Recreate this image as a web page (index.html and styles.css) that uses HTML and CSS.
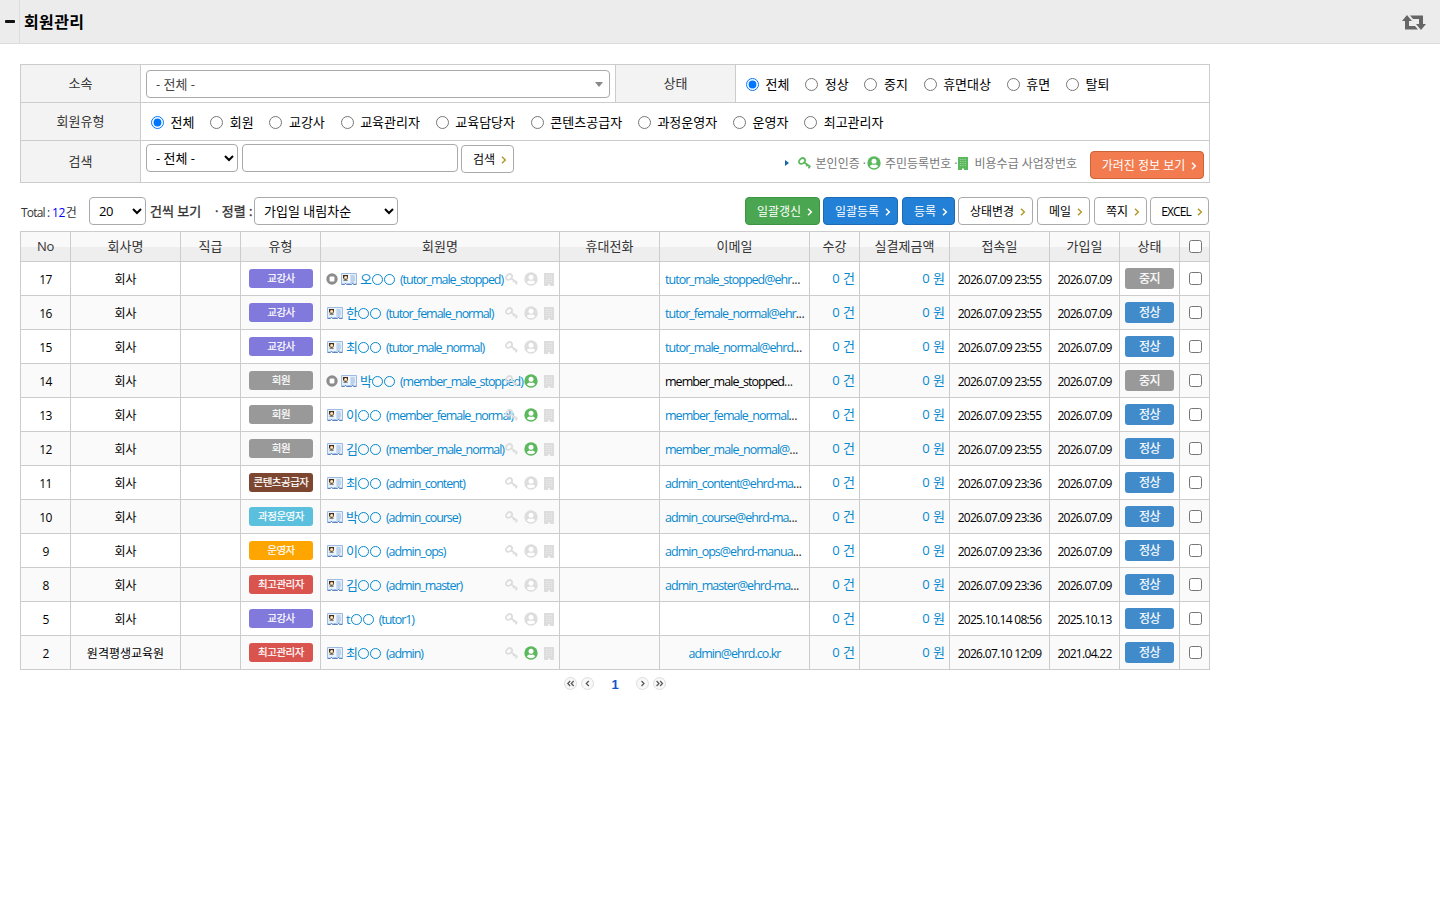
FILE: index.html
```html
<!DOCTYPE html>
<html lang="ko">
<head>
<meta charset="utf-8">
<title>회원관리</title>
<link rel="stylesheet" href="styles.css">
</head>
<body>
<svg width="0" height="0" class="defs">
  <symbol id="chev" viewBox="0 0 6 8"><path d="M1 .8 4.3 4 1 7.2" fill="none" stroke="currentColor" stroke-width="1.5"/></symbol>
  <symbol id="key" viewBox="0 0 13 12"><ellipse cx="4" cy="4" rx="3.300" ry="2.500" transform="rotate(-40 4 4)" fill="none" stroke="currentColor" stroke-width="1.800"/><path d="M6 5.200 12.300 9.700M8.300 9.200 9.800 7.200M10.600 11.400 12.200 8.800" fill="none" stroke="currentColor" stroke-width="1.800"/></symbol>
  <symbol id="user" viewBox="0 0 14 14"><circle cx="7" cy="7" r="6.700" fill="currentColor"/><circle cx="7" cy="5.200" r="2.500" fill="#fff"/><path d="M2.800 10.200Q4 8.600 5.400 8.600Q7 9.500 8.600 8.600Q10 8.600 11.200 10.200Q9.800 12.200 7 12.200T2.800 10.200z" fill="#fff"/></symbol>
  <symbol id="bldg" viewBox="0 0 10 13"><path d="M0 0h10v13H6v-1.500H4V13H0z" fill="currentColor"/><path d="M2 2.500h6M2 4.500h6M2 6.500h6M2 8.500h6" stroke="#fff" stroke-opacity=".35" stroke-width="1" stroke-dasharray="1 .67"/></symbol>
  <symbol id="stop" viewBox="0 0 12 12"><circle cx="6" cy="6" r="5.700" fill="#8d8d8d"/><rect x="3.600" y="3.600" width="4.800" height="4.800" rx="1" fill="#fff"/></symbol>
  <symbol id="card" viewBox="0 0 16 12"><path d="M.5.5h15v10.500h-3l-.7-1-1 1H9l-1-1-1 1H5.500l-1-1-1 1h-3z" fill="#e2effd" stroke="#9dbbe2"/><path d="M.5 11.500h3l1-1 1 1h5l1-1 1 1h3" fill="none" stroke="#4f76b5" stroke-width=".9"/><path d="M8 1v9" stroke="#fff"/><rect x="2" y="2" width="5" height="5.500" fill="#e8dcc0"/><path d="M2 2h5v3.500H2z" fill="#4a2c12"/><circle cx="4.700" cy="4.300" r="1.400" fill="#ffe6c2"/><path d="M2.300 7.500q2.300-2.400 4.500 0z" fill="#222"/><path d="M9.500 3h4M9.500 5h4.500M9.500 7h4.500M9.500 9h3.500" stroke="#9bb5da"/></symbol>
</svg>

<header class="topbar">
  <div class="fold"><i></i></div>
  <h1>회원관리</h1>
  <svg class="retweet" viewBox="0 0 24 15"><path d="M5 0 10 6H7v5h6l3 3.500H3V6H0zM19 15 14 9h3V4h-6L8 .5h13V9h3z" fill="#666"/></svg>
</header>

<main>
  <section class="filter">
    <div class="frow r1">
      <div class="lab">소속</div>
      <div class="cell"><div class="combo"><span>- 전체 -</span><i></i></div></div>
      <div class="lab mid">상태</div>
      <div class="cell radios">
        <label><input type="radio" name="st" checked>전체</label><label><input type="radio" name="st">정상</label><label><input type="radio" name="st">중지</label><label><input type="radio" name="st">휴면대상</label><label><input type="radio" name="st">휴면</label><label><input type="radio" name="st">탈퇴</label>
      </div>
    </div>
    <div class="frow r2">
      <div class="lab">회원유형</div>
      <div class="cell radios">
        <label><input type="radio" name="ty" checked>전체</label><label><input type="radio" name="ty">회원</label><label><input type="radio" name="ty">교강사</label><label><input type="radio" name="ty">교육관리자</label><label><input type="radio" name="ty">교육담당자</label><label><input type="radio" name="ty">콘텐츠공급자</label><label><input type="radio" name="ty">과정운영자</label><label><input type="radio" name="ty">운영자</label><label><input type="radio" name="ty">최고관리자</label>
      </div>
    </div>
    <div class="frow r3">
      <div class="lab">검색</div>
      <div class="cell search">
        <select class="s1"><option>- 전체 -</option></select>
        <input type="text" class="q">
        <button class="btn find">검색<svg><use href="#chev"/></svg></button>
        <div class="legend">
          <i class="tri"></i>
          <svg class="k"><use href="#key"/></svg><span class="l1">본인인증 ·</span>
          <svg class="u"><use href="#user"/></svg><span class="l2">주민등록번호 ·</span>
          <svg class="b"><use href="#bldg"/></svg><span class="l3">비용수급 사업장번호</span>
        </div>
        <button class="btn orange">가려진 정보 보기<svg><use href="#chev"/></svg></button>
      </div>
    </div>
  </section>

  <section class="tools">
    <span class="total"><span class="tt">Total :</span> <b>12</b>건</span>
    <select class="s2"><option>20</option></select>
    <span class="strong per">건씩 보기</span>
    <span class="strong sort">· 정렬 :</span>
    <select class="s3"><option>가입일 내림차순</option></select>
    <div class="buttons">
      <button class="btn green w75">일괄갱신<svg><use href="#chev"/></svg></button>
      <button class="btn blue w75 g4">일괄등록<svg><use href="#chev"/></svg></button>
      <button class="btn blue w53">등록<svg><use href="#chev"/></svg></button>
      <button class="btn w75 g4">상태변경<svg><use href="#chev"/></svg></button>
      <button class="btn w53 g4">메일<svg><use href="#chev"/></svg></button>
      <button class="btn w53">쪽지<svg><use href="#chev"/></svg></button>
      <button class="btn w59"><span class="xl">EXCEL</span><svg><use href="#chev"/></svg></button>
    </div>
  </section>

  <table class="list">
    <colgroup><col class="c50"><col class="c110"><col class="c60"><col class="c80"><col class="c239"><col class="c100"><col class="c150"><col class="c50"><col class="c90"><col class="c100"><col class="c70"><col class="c60"><col class="c30"></colgroup>
    <thead><tr><th><span class="no">No</span></th><th>회사명</th><th>직급</th><th>유형</th><th>회원명</th><th>휴대전화</th><th>이메일</th><th>수강</th><th>실결제금액</th><th>접속일</th><th>가입일</th><th>상태</th><th><input type="checkbox"></th></tr></thead>
    <tbody id="rows"></tbody>
  </table>

  <nav class="pager">
    <a><svg viewBox="0 0 13 13"><path d="M6.200 4 3.800 6.500l2.400 2.500M9.700 4 7.300 6.500l2.400 2.500"/></svg></a>
    <a><svg viewBox="0 0 13 13"><path d="M7.800 4 5.300 6.500l2.500 2.500"/></svg></a>
    <strong>1</strong>
    <a><svg viewBox="0 0 13 13"><path d="M5.500 4 8 6.500 5.500 9"/></svg></a>
    <a><svg viewBox="0 0 13 13"><path d="M3.600 4 6 6.500 3.600 9M7.100 4l2.400 2.500L7.100 9"/></svg></a>
  </nav>
</main>
<script src="rows.js"></script>
</body>
</html>
```
FILE: styles.css
```css
* { box-sizing: border-box; }
body { margin: 0; background: #fff; color: #000; font: 13px/18px "Open Sans", "Noto Sans CJK KR", sans-serif; }
.defs { position: absolute; }
svg { display: block; flex: none; }
.topbar { display: flex; height: 44px; background: #ececec; border-bottom: 1px solid #dcdcdc; }
.fold { width: 20px; border-right: 1px solid #dcdcdc; padding: 20px 0 0 5px; }
.fold i { display: block; width: 10px; height: 3px; background: #111; border-radius: 1px; }
h1 { margin: 11px 0 0 4px; font-size: 16px; line-height: 22px; font-weight: 700; letter-spacing: .4px; }
.retweet { width: 24px; height: 15px; margin: 15px 14px 0 auto; }
main { width: 1190px; margin: 20px 0 0 20px; }

.filter { border: 1px solid #ccc; border-bottom: 0; }
.frow { display: grid; grid-template-columns: 120px 1fr; border-bottom: 1px solid #ccc; height: 38px; }
.r1 { grid-template-columns: 120px 474px 121px 1fr; }
.r3 { height: 42px; }
.lab { background: #f3f3f3; border-right: 1px solid #ccc; color: #333; text-align: center; line-height: 36px; }
.r3 .lab { line-height: 40px; }
.mid { border-left: 1px solid #ccc; }
.cell { padding-left: 5px; min-width: 0; }
.combo { display: flex; align-items: center; justify-content: space-between; width: 464px; height: 28px; margin-top: 5px; border: 1px solid #aaa; border-radius: 4px; padding: 0 6px 0 9px; color: #444; }
.combo i { border: 4px solid transparent; border-top: 5px solid #888; border-bottom: 0; }
.radios { display: flex; padding: 1px 0 0 10px; gap: 15.800px; align-items: center; white-space: nowrap; }
.radios label { display: flex; align-items: center; }
.radios input { margin: 0 6.500px 0 0; width: 13px; height: 13px; }
.search { display: flex; align-items: flex-start; padding-top: 3px; padding-right: 5px; }
select, .q { height: 28px; border: 1px solid #aaa; border-radius: 4px; background: #fff; color: #000; font: inherit; }
select { padding: 0 0 0 5px; }
.s1 { width: 92px; margin-right: 4px; }
.s2 { letter-spacing: -.5px; }
.q { width: 216px; margin-right: 3px; }
.btn { display: flex; align-items: center; justify-content: center; gap: 6px; height: 28px; padding: 1px 0 0 5px; border: 1px solid #aaa; border-radius: 4px; background: #fff; color: #000; font: 12px/18px "Open Sans", "Noto Sans CJK KR", sans-serif; white-space: nowrap; flex: none; }
.btn svg { width: 6px; height: 8px; color: #b29a2e; }
.btn.find { width: 53px; margin-top: 1px; }
.orange { width: 114px; margin-top: 7px; background: #f27b4f; border-color: #cd6237; color: #fff; }
.orange svg, .green svg, .blue svg { color: #fff; }
.green { background: #4aa651; border-color: #3b9542; color: #fff; }
.blue { background: #2280d6; border-color: #1c69b5; color: #fff; }
.legend { display: flex; align-items: center; height: 20px; margin: 9px 13px 0 auto; color: #777; font-size: 12px; white-space: nowrap; }
.legend span { padding-top: 2px; }
.tri { border: 3px solid transparent; border-left: 4px solid #15669f; border-right: 0; margin-right: 9px; }
.k { width: 13px; height: 12px; color: #5cb85c; margin-right: 5px; }
.u { width: 14px; height: 14px; color: #5cb85c; margin: 0 4px 0 0; }
.b { width: 10px; height: 13px; color: #5cb85c; margin: 0 7px 0 0; }
.l1 { margin-right: 1px; }

.tools { display: flex; align-items: center; height: 28px; margin: 14px 0 6px; white-space: nowrap; }
.total { width: 69px; padding-left: 1px; font-size: 12px; letter-spacing: -.5px; color: #333; padding-top: 3px; }
.tt { letter-spacing: -.8px; }
.total b { color: #00f; font-weight: 400; margin-right: 1px; }
.s2 { width: 57px; }
.s3 { width: 144px; }
.strong { color: #333; -webkit-text-stroke: .35px #333; }
.per { width: 69px; padding-left: 4px; }
.sort { width: 39px; }
.buttons { display: flex; gap: 3px; margin: 0 1px 0 auto; }
.g4 { margin-right: 1px; }
.w75 { width: 75px; }
.w53 { width: 53px; }
.w59 { width: 59px; }
.xl { letter-spacing: -.9px; }

.list { width: 1190px; table-layout: fixed; border-collapse: separate; border-spacing: 0; border: solid #ccc; border-width: 1px 0 0 1px; }
.c30 { width: 30px; } .c50 { width: 50px; } .c60 { width: 60px; } .c70 { width: 70px; } .c80 { width: 80px; } .c90 { width: 90px; }
.c100 { width: 100px; } .c110 { width: 110px; } .c150 { width: 150px; } .c239 { width: 239px; }
th, td { border: solid #ccc; border-width: 0 1px 1px 0; text-align: center; vertical-align: middle; white-space: nowrap; overflow: hidden; }
th { height: 30px; padding: 0 0 2px; color: #333; font-weight: 400; background: linear-gradient(#f9f9f9 50%, #eee 50%); }
.no { letter-spacing: -.3px; }
td { height: 34px; padding: 1px 5px 0; font-size: 12px; }
tbody tr:nth-child(even) { background: #fafafa; }
th input, td input { display: block; width: 13px; height: 13px; margin: 0 0 0 9px; }
th input { margin-top: 2px; }
td input { margin: -2px 0 0 4px; }
.num, .txt { display: block; padding-top: 2px; }
.num { letter-spacing: -.7px; }
.type { width: 64px; height: 19px; margin: -2px auto 0 3px; border-radius: 3px; color: #fff; font-size: 10.500px; line-height: 19px; letter-spacing: -.5px; -webkit-text-stroke: .2px #fff; }
.tutor { background: #8179dc; } .member { background: #999; } .content { background: #7c4631; } .course { background: #5bc0de; } .ops { background: #ffa500; } .master { background: #d9534f; }
.person { display: flex; align-items: center; position: relative; height: 20px; color: #0688cf; font-size: 13px; }
.person > span { margin-top: -1px; }
.stop { width: 12px; height: 12px; margin-right: 2px; }
.card { width: 16px; height: 12px; margin: 0 3px 0 1px; }
.ring { display: inline-block; width: 11px; height: 11px; margin: 0 1px 0 0; border: 1px solid #0688cf; border-radius: 50%; vertical-align: -1px; }
.person .id { font-size: 12.500px; letter-spacing: -1.050px; margin: 1px 0 0 4px; }
.marks { position: absolute; right: 0; top: 3px; display: flex; align-items: center; color: #ddd; }
.marks .k { color: inherit; margin: 0 6px 0 0; }
.marks .u { color: inherit; margin: 0 6px 0 0; }
.marks .b { color: inherit; margin: 0; }
.marks .on { color: #5cb85c; }
.mail { display: block; padding-top: 1px; font-size: 12.500px; letter-spacing: -.97px; color: #0688cf; }
.mail i { color: #333; font-style: normal; letter-spacing: -.4px; }
.mail.dark { color: #000; }
.left { text-align: left; }
.money { text-align: right; padding: 0 4px 1px 0; font-size: 13px; color: #0688cf; }
.state { width: 49px; height: 21px; margin: -2px 0 0; border-radius: 3px; background: #428bca; color: #fff; line-height: 22px; letter-spacing: -.5px; -webkit-text-stroke: .2px #fff; }
.state.halt { background: #999; }

.pager { display: flex; align-items: center; height: 13px; margin: 7px 0 0 544px; gap: 4px; }
.pager a { width: 13px; height: 13px; border: 1px solid #ddd; border-radius: 50%; background: #f8f8f8; }
.pager svg { width: 13px; height: 13px; margin: -1px; fill: none; stroke: #555; stroke-width: 1.2; }
.pager strong { width: 34px; text-align: center; color: #15c; font: 700 13px/15px "Liberation Sans", sans-serif; padding-top: 2px; }
```
FILE: rows.js
```js
const types = { tutor: '교강사', member: '회원', content: '콘텐츠공급자', course: '과정운영자', ops: '운영자', master: '최고관리자' };
const data = [
  [17, 'tutor', '오', 'tutor_male_stopped', 'tutor_male_stopped@ehr…', '2026.07.09 23:55', 1, 0],
  [16, 'tutor', '한', 'tutor_female_normal', 'tutor_female_normal@ehr…', '2026.07.09 23:55', 0, 0],
  [15, 'tutor', '최', 'tutor_male_normal', 'tutor_male_normal@ehrd…', '2026.07.09 23:55', 0, 0],
  [14, 'member', '박', 'member_male_stopped', 'member_male_stopped…', '2026.07.09 23:55', 1, 1],
  [13, 'member', '이', 'member_female_normal', 'member_female_normal…', '2026.07.09 23:55', 0, 1],
  [12, 'member', '김', 'member_male_normal', 'member_male_normal@…', '2026.07.09 23:55', 0, 1],
  [11, 'content', '최', 'admin_content', 'admin_content@ehrd-ma…', '2026.07.09 23:36', 0, 0],
  [10, 'course', '박', 'admin_course', 'admin_course@ehrd-ma…', '2026.07.09 23:36', 0, 0],
  [9, 'ops', '이', 'admin_ops', 'admin_ops@ehrd-manua…', '2026.07.09 23:36', 0, 0],
  [8, 'master', '김', 'admin_master', 'admin_master@ehrd-ma…', '2026.07.09 23:36', 0, 0],
  [5, 'tutor', 't', 'tutor1', '', '2025.10.14 08:56', 0, 0, '2025.10.13'],
  [2, 'master', '최', 'admin', 'admin@ehrd.co.kr', '2026.07.10 12:09', 0, 1, '2021.04.22']
];
const icon = (name, cls) => `<svg class="${cls}"><use href="#${name}"/></svg>`;
document.getElementById('rows').innerHTML = data.map(([no, type, name, id, mail, seen, halted, verified, joined]) => `
  <tr>
    <td><span class="num">${no}</span></td>
    <td><span class="txt">${no === 2 ? '원격평생교육원' : '회사'}</span></td>
    <td></td>
    <td><div class="type ${type}">${types[type]}</div></td>
    <td><div class="person">${halted ? icon('stop', 'stop') : ''}${icon('card', 'card')}<span>${name}<i class="ring"></i><i class="ring"></i></span><span class="id">(${id})</span>
      <div class="marks">${icon('key', 'k')}${icon('user', verified ? 'u on' : 'u')}${icon('bldg', 'b')}</div></div></td>
    <td></td>
    <td class="${mail.endsWith('…') ? 'left' : ''}"><span class="mail${no === 14 ? ' dark' : ''}">${mail.replace('…', '<i>...</i>')}</span></td>
    <td class="money">0 건</td>
    <td class="money">0 원</td>
    <td><span class="num">${seen}</span></td>
    <td><span class="num">${joined || '2026.07.09'}</span></td>
    <td><div class="state${halted ? ' halt' : ''}">${halted ? '중지' : '정상'}</div></td>
    <td><input type="checkbox"></td>
  </tr>`).join('');
```
